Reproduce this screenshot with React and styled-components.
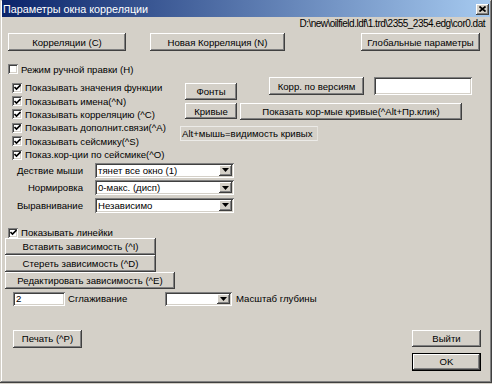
import React from 'react';
import styled, { createGlobalStyle } from 'styled-components';

const Global = createGlobalStyle`
  html, body { margin: 0; padding: 0; background: #d4d0c8; }
  body { font-family: "Liberation Sans", Arial, sans-serif; font-size: 9.6px; color: #000; }
  * { box-sizing: border-box; }
`;

const Window = styled.div`
  width: 492px;
  height: 383px;
  background: #d4d0c8;
  display: flex;
  flex-direction: column;
  box-shadow: inset -1px -1px #404040, inset 1px 1px #d4d0c8, inset -2px -2px #808080, inset 2px 2px #ffffff;
`;

const TitleBar = styled.div`
  height: 17px;
  margin: 0 2px;
  padding-left: 1px;
  display: flex;
  align-items: center;
  background: linear-gradient(to right, #0a246a, #a6caf0);
  color: #fff;
  font-size: 10.8px;
`;

const CloseBtn = styled.div`
  margin-left: auto;
  margin-right: 1px;
  margin-top: 1px;
  width: 13px;
  height: 11px;
  background: #d4d0c8;
  display: flex;
  align-items: center;
  justify-content: center;
  box-shadow: inset -1px -1px #404040, inset 1px 1px #fff, inset -2px -2px #808080;
`;

const PathRow = styled.div`
  height: 12px;
  margin-top: 1px;
  padding-right: 7px;
  line-height: 12px;
  font-size: 10px;
  letter-spacing: -0.5px;
  text-align: right;
  white-space: nowrap;
`;

const TopRow = styled.div`
  margin-top: 3px;
  display: flex;
  gap: 24px;
  padding: 0 12px 0 8px;
  & > :last-child { margin-left: auto; }
`;

const Button = styled.button`
  width: ${p => p.$w}px;
  height: ${p => p.$h || 17}px;
  margin: 0;
  margin-top: ${p => p.$mt || 0}px;
  padding: 0;
  border: none;
  background: #d4d0c8;
  font: inherit;
  color: #000;
  display: flex;
  align-items: center;
  justify-content: center;
  white-space: nowrap;
  flex: none;
  box-shadow: ${p => p.$default
    ? 'inset 0 0 0 1px #000, inset -2px -2px #404040, inset 2px 2px #fff, inset -3px -3px #808080'
    : 'inset -1px -1px #404040, inset 1px 1px #fff, inset -2px -2px #808080'};
`;

const CheckRow = styled.label`
  display: flex;
  align-items: center;
  gap: 3px;
  height: ${p => p.$h || 12}px;
  margin-left: ${p => p.$left || 0}px;
  white-space: nowrap;
`;

const Box = styled.span`
  width: 10px;
  height: 10px;
  flex: none;
  background: #fff;
  display: flex;
  align-items: center;
  justify-content: center;
  box-shadow: inset 1px 1px #808080, inset -1px -1px #fff, inset 2px 2px #404040, inset -2px -2px #d4d0c8;
`;

const ManualRow = styled.div`
  margin-top: 12px;
`;

const Middle = styled.div`
  margin-top: 2px;
  display: flex;
  align-items: flex-start;
`;

const CheckList = styled.div`
  margin-left: 12px;
  margin-top: 4px;
  width: 168px;
  display: flex;
  flex-direction: column;
`;

const RightCol = styled.div`
  display: flex;
  flex-direction: column;
`;

const RightRow = styled.div`
  display: flex;
  align-items: flex-start;
  margin-top: ${p => p.$mt || 0}px;
`;

const Spacer = styled.div`
  width: ${p => p.$w}px;
  flex: none;
`;

const Field = styled.div`
  width: ${p => p.$w}px;
  height: ${p => p.$h || 18}px;
  flex: none;
  background: #fff;
  padding-left: 3px;
  display: flex;
  align-items: center;
  box-shadow: inset 1px 1px #808080, inset -1px -1px #fff, inset 2px 2px #404040, inset -2px -2px #d4d0c8;
`;

const Hint = styled.div`
  width: 138px;
  height: 15px;
  padding-left: 1px;
  display: flex;
  align-items: center;
  white-space: nowrap;
  border: 1px solid #ecebe8;
  border-right-color: #e4e2dc;
`;

const ComboSection = styled.div`
  margin-top: 1.6px;
  display: flex;
  flex-direction: column;
  gap: 2.5px;
`;

const ComboRow = styled.div`
  display: grid;
  grid-template-columns: 83px 139px;
  column-gap: 12px;
  align-items: center;
  height: 15px;
`;

const ComboLabel = styled.div`
  text-align: right;
  white-space: nowrap;
`;

const Combo = styled.div`
  width: ${p => p.$w}px;
  height: ${p => p.$h || 15}px;
  flex: none;
  background: #fff;
  display: flex;
  align-items: stretch;
  padding: 2px;
  box-shadow: inset 1px 1px #808080, inset -1px -1px #fff, inset 2px 2px #404040, inset -2px -2px #d4d0c8;
`;

const ComboText = styled.div`
  flex: 1;
  padding-left: 1px;
  display: flex;
  align-items: center;
  white-space: nowrap;
  overflow: hidden;
`;

const DropBtn = styled.div`
  width: 13px;
  flex: none;
  background: #d4d0c8;
  display: flex;
  align-items: center;
  justify-content: center;
  box-shadow: inset -1px -1px #404040, inset 1px 1px #fff, inset -2px -2px #808080;
`;

const RulerRow = styled.div`
  margin-top: 14px;
`;

const DepButtons = styled.div`
  margin-left: 5px;
  margin-top: -1px;
  display: flex;
  flex-direction: column;
`;

const SmoothRow = styled.div`
  margin-top: 3px;
  margin-left: 13px;
  display: flex;
  align-items: center;
  height: 14px;
`;

const Text = styled.div`
  width: ${p => (p.$w ? `${p.$w}px` : 'auto')};
  margin-left: ${p => p.$ml || 0}px;
  flex: none;
  white-space: nowrap;
`;

const BottomRow = styled.div`
  margin-top: 24px;
  padding: 0 11px 0 13px;
  display: flex;
  justify-content: space-between;
  align-items: flex-start;
`;

const ExitCol = styled.div`
  display: flex;
  flex-direction: column;
  gap: 6px;
`;

const Check = ({ checked }) => (
  <Box>
    {checked && (
      <svg width="7" height="7" viewBox="0 0 7 7">
        <path d="M0.5 3 L2.5 5 L6.5 1" stroke="#000" strokeWidth="1.6" fill="none" />
      </svg>
    )}
  </Box>
);

const Arrow = () => (
  <svg width="7" height="4" viewBox="0 0 7 4">
    <path d="M0 0 H7 L3.5 4 Z" fill="#000" />
  </svg>
);

const ComboBox = ({ w, h, value }) => (
  <Combo $w={w} $h={h}>
    <ComboText>{value}</ComboText>
    <DropBtn><Arrow /></DropBtn>
  </Combo>
);

const checks = [
  'Показывать значения функции',
  'Показывать имена(^N)',
  'Показывать корреляцию (^C)',
  'Показывать дополнит.связи(^A)',
  'Показывать сейсмику(^S)',
  'Показ.кор-ции по сейсмике(^O)',
];

const combos = [
  ['Дествие мыши', 'тянет все окно (1)'],
  ['Нормировка', '0-макс. (дисп)'],
  ['Выравнивание', 'Независимо'],
];

export default function App() {
  return (
    <>
      <Global />
      <Window>
        <TitleBar>
          Параметры окна корреляции
          <CloseBtn>
            <svg width="7" height="6" viewBox="0 0 7 6">
              <path d="M0.5 0.5 L6.5 5.5 M6.5 0.5 L0.5 5.5" stroke="#000" strokeWidth="1.7" />
            </svg>
          </CloseBtn>
        </TitleBar>
        <PathRow>D:\new\oilfield.ldf\1.trd\2355_2354.edg\cor0.dat</PathRow>
        <TopRow>
          <Button $w={118} $h={18}>Корреляции (С)</Button>
          <Button $w={135} $h={18}>Новая Корреляция (N)</Button>
          <Button $w={119} $h={18}>Глобальные параметры</Button>
        </TopRow>
        <ManualRow>
          <CheckRow $left={8}><Check />Режим ручной правки (H)</CheckRow>
        </ManualRow>
        <Middle>
          <CheckList>
            {checks.map(c => (
              <CheckRow key={c} $h={13.4}><Check checked />{c}</CheckRow>
            ))}
          </CheckList>
          <RightCol>
            <RightRow>
              <Spacer $w={5} />
              <Button $w={52} $h={17} $mt={6}>Фонты</Button>
              <Spacer $w={32} />
              <Button $w={95} $h={18}>Корр. по версиям</Button>
              <Spacer $w={10} />
              <Field $w={98} $h={18} />
            </RightRow>
            <RightRow $mt={3}>
              <Spacer $w={5} />
              <Button $w={52} $h={16}>Кривые</Button>
              <Spacer $w={3} />
              <Button $w={222} $h={17}>Показать кор-мые кривые(^Alt+Пр.клик)</Button>
            </RightRow>
            <RightRow $mt={6}>
              <Hint>Alt+мышь=видимость кривых</Hint>
            </RightRow>
          </RightCol>
        </Middle>
        <ComboSection>
          {combos.map(([l, v]) => (
            <ComboRow key={l}>
              <ComboLabel>{l}</ComboLabel>
              <ComboBox w={139} value={v} />
            </ComboRow>
          ))}
        </ComboSection>
        <RulerRow>
          <CheckRow $left={8}><Check checked />Показывать линейки</CheckRow>
        </RulerRow>
        <DepButtons>
          <Button $w={151} $h={17}>Вставить зависимость (^I)</Button>
          <Button $w={151} $h={17}>Стереть зависимость (^D)</Button>
          <Button $w={170} $h={17}>Редактировать зависимость (^E)</Button>
        </DepButtons>
        <SmoothRow>
          <Field $w={52} $h={14}>2</Field>
          <Text $w={94} $ml={3}>Сглаживание</Text>
          <Text $ml={3}><ComboBox w={67} h={14} value="" /></Text>
          <Text $ml={4}>Масштаб глубины</Text>
        </SmoothRow>
        <BottomRow>
          <Button $w={69} $h={18}>Печать (^P)</Button>
          <ExitCol>
            <Button $w={69} $h={17}>Выйти</Button>
            <Button $w={69} $h={18} $default>OK</Button>
          </ExitCol>
        </BottomRow>
      </Window>
    </>
  );
}
